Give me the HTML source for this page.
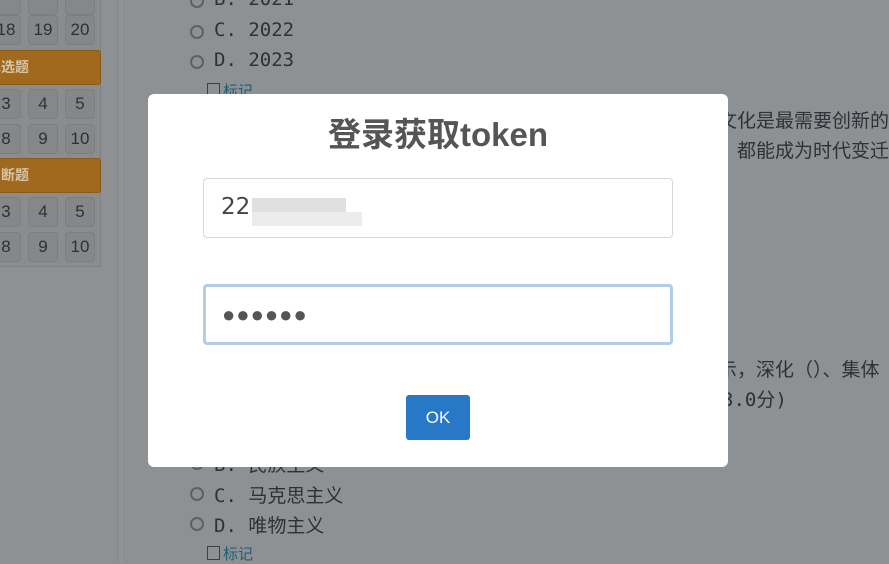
<!DOCTYPE html>
<html><head><meta charset="utf-8"><style>
*{margin:0;padding:0;box-sizing:border-box}
body{width:889px;height:563px;overflow:hidden;background:#8e9194;position:relative;font-family:"Liberation Sans","Noto Sans CJK SC",sans-serif}
.a{position:absolute}
.sb{left:-10px;top:0;width:111px;height:267px;background:#8b8c8d;border-right:1px solid #7f8183;border-bottom:1px solid #7f8183}
.b{position:absolute;width:30px;height:30px;background:#858789;border:1px solid #7c7e80;border-radius:4px;color:#2e3134;font-size:17px;text-align:center;line-height:28px}
.h{position:absolute;left:-10px;width:111px;height:35px;background:#a0691d;border:1px solid #8a5a18;border-radius:3px;color:#d6c4a6;font-weight:bold;font-size:14px;line-height:33px;padding-left:0;text-indent:-4px}
.t{position:absolute;color:#2e3236;font-size:19px;white-space:nowrap;font-family:"DejaVu Sans Mono","Noto Sans CJK SC",monospace}
.r{position:absolute;width:14px;height:14px;border:2px solid #5e6063;border-radius:50%}
.mk{position:absolute;color:#1f5d7a;font-size:15px}
.mk:before{content:"";display:inline-block;width:11px;height:12px;border:1.5px solid #3e4042;margin-right:3px;vertical-align:-1px}
.modal{left:148px;top:94px;width:580px;height:373px;background:#fff;border-radius:6px}
</style></head><body>
<div class="a sb"></div>
<div class="a" style="left:117px;top:0;width:1px;height:563px;background:#848689"></div>
<div class="a" style="left:121px;top:0;width:1px;height:563px;background:#989a9d"></div>
<div class="b" style="left:-9px;top:-15px"></div><div class="b" style="left:28px;top:-15px"></div><div class="b" style="left:65px;top:-15px"></div>
<div class="b" style="left:-9px;top:15px">18</div><div class="b" style="left:28px;top:15px">19</div><div class="b" style="left:65px;top:15px">20</div>
<div class="h" style="top:50px">单选题</div>
<div class="b" style="left:-9px;top:89px">3</div><div class="b" style="left:28px;top:89px">4</div><div class="b" style="left:65px;top:89px">5</div>
<div class="b" style="left:-9px;top:124px">8</div><div class="b" style="left:28px;top:124px">9</div><div class="b" style="left:65px;top:124px">10</div>
<div class="h" style="top:158px">判断题</div>
<div class="b" style="left:-9px;top:197px">3</div><div class="b" style="left:28px;top:197px">4</div><div class="b" style="left:65px;top:197px">5</div>
<div class="b" style="left:-9px;top:232px">8</div><div class="b" style="left:28px;top:232px">9</div><div class="b" style="left:65px;top:232px">10</div>

<div class="r" style="left:190px;top:-6px"></div><div class="t" style="left:214px;top:-12px">B. 2021</div>
<div class="r" style="left:190px;top:25px"></div><div class="t" style="left:214px;top:19px">C. 2022</div>
<div class="r" style="left:190px;top:55px"></div><div class="t" style="left:214px;top:49px">D. 2023</div>
<div class="mk" style="left:207px;top:80px">标记</div>
<div class="t" style="left:718px;top:106px">文化是最需要创新的</div>
<div class="t" style="left:718px;top:136px">，都能成为时代变迁</div>
<div class="t" style="left:718px;top:355px">示，深化（）、集体</div>
<div class="t" style="left:722px;top:385px">3.0分)</div>
<div class="r" style="left:190px;top:456px"></div><div class="t" style="left:214px;top:450px">B. 民族主义</div>
<div class="r" style="left:190px;top:487px"></div><div class="t" style="left:214px;top:481px">C. 马克思主义</div>
<div class="r" style="left:190px;top:517px"></div><div class="t" style="left:214px;top:511px">D. 唯物主义</div>
<div class="mk" style="left:207px;top:543px">标记</div>

<div class="a modal">
<div class="a" style="left:0;width:580px;top:14px;text-align:center;font-size:33px;font-weight:bold;color:#555">登录获取token</div>
<div class="a" style="left:55px;top:84px;width:470px;height:60px;border:1px solid #d8d8d8;border-radius:4px"></div>
<div class="a" style="left:73px;top:100px;font-size:23px;color:#444;font-family:'DejaVu Sans',sans-serif">22</div>
<div class="a" style="left:104px;top:104px;width:94px;height:14px;background:#e0e0e0"></div>
<div class="a" style="left:104px;top:118px;width:110px;height:14px;background:#ececec"></div>
<div class="a" style="left:55px;top:190px;width:470px;height:61px;border:3px solid #b2cde6;border-radius:4px"></div>
<div class="a" style="left:74px;top:208px;font-size:22px;color:#555;letter-spacing:1px">●●●●●●</div>
<div class="a" style="left:258px;top:301px;width:64px;height:45px;background:#2878c8;border-radius:3px;color:#fff;font-size:17px;text-align:center;line-height:45px">OK</div>
</div>
</body></html>
